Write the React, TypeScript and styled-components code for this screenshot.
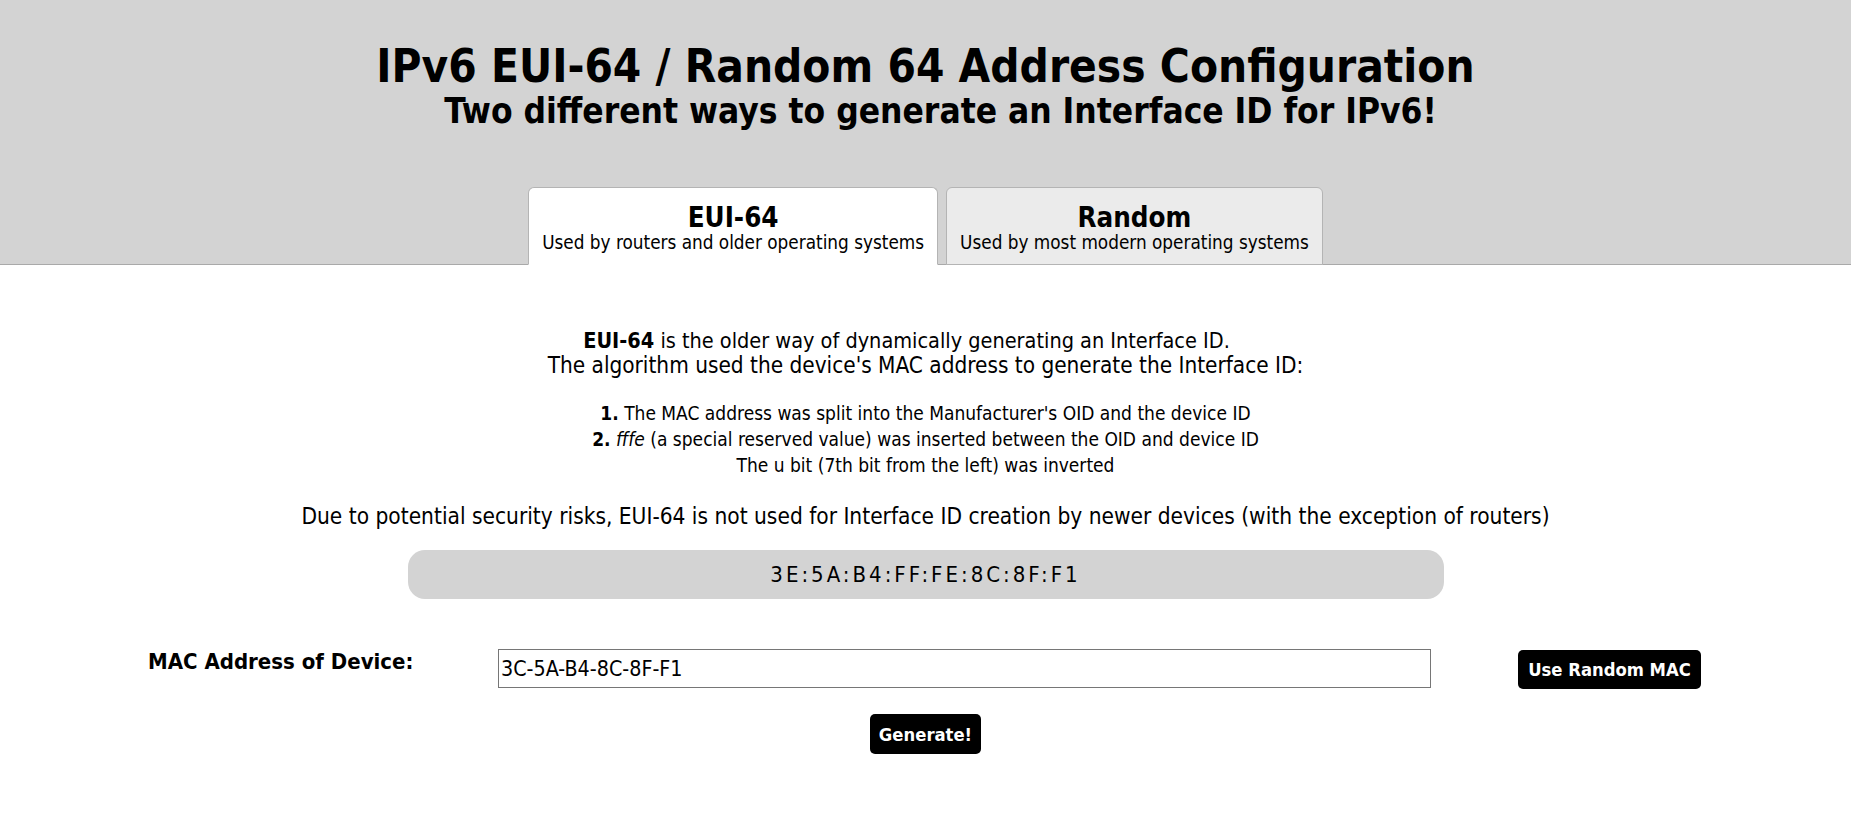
import React from "react";
import styled, { createGlobalStyle } from "styled-components";

const FONT = `"DejaVu Sans Condensed", "DejaVu Sans", sans-serif`;

const Global = createGlobalStyle`
  html, body { margin: 0; padding: 0; background: #fff; }
  body { font-family: ${FONT}; color: #000; }
`;

const Header = styled.header`
  background: #d3d3d3;
  border-bottom: 1px solid #a9a9a9;
  padding-top: 41px;
  display: flex;
  flex-direction: column;
  align-items: center;
`;

const Title = styled.h1`
  margin: 0;
  font-size: 45.5px;
  line-height: 52px;
  font-weight: bold;
  text-align: center;
`;

const Subtitle = styled.h2`
  margin: 0 0 0 30px;
  font-size: 35px;
  line-height: 36px;
  font-weight: bold;
  text-align: center;
`;

const Tabs = styled.nav`
  display: flex;
  gap: 8px;
  justify-content: center;
  margin-top: 58px;
  margin-bottom: -1px;
`;

const Tab = styled.div<{ $active?: boolean }>`
  background: ${(p) => (p.$active ? "#fff" : "#ebebeb")};
  border: 1px solid #b4b4b4;
  border-bottom-color: ${(p) => (p.$active ? "#fff" : "#b4b4b4")};
  border-radius: 6px 6px 0 0;
  padding: 14px 13px 10px;
  text-align: center;
`;

const TabTitle = styled.div`
  font-size: 27.5px;
  line-height: 30px;
  font-weight: bold;
`;

const TabSub = styled.div`
  font-size: 18.8px;
  line-height: 22px;
`;

const Main = styled.main`
  text-align: center;
  padding-top: 64px;
`;

const Lead = styled.p<{ $size: number; $trail?: number }>`
  margin: 0;
  font-size: ${(p) => p.$size}px;
  line-height: 24px;
  padding-right: ${(p) => p.$trail ?? 0}px;
`;

const Steps = styled.ol`
  list-style: none;
  margin: 23px 0 0;
  padding: 0;
  font-size: 19px;
  line-height: 26px;
`;

const Warning = styled.p`
  margin: 25px 0 0;
  font-size: 22.5px;
  line-height: 26px;
`;

const Result = styled.div`
  width: 1036px;
  height: 49px;
  margin: 21px auto 0;
  background: #d3d3d3;
  border-radius: 17px;
  display: flex;
  align-items: center;
  justify-content: center;
  font-size: 22px;
  letter-spacing: 3px;
`;

const FormRow = styled.div`
  display: grid;
  grid-template-columns: 350px 933px auto;
  padding: 0 0 0 148px;
  margin-top: 50px;
  text-align: left;
  align-items: start;
`;

const Label = styled.label`
  font-size: 22px;
  font-weight: bold;
  line-height: 26px;
`;

const Input = styled.input`
  box-sizing: border-box;
  width: 933px;
  height: 39px;
  border: 1px solid #767676;
  padding: 0 2px;
  font-family: ${FONT};
  font-size: 21.3px;
`;

const Button = styled.button`
  background: #000;
  color: #fff;
  border: none;
  border-radius: 5px;
  font-family: ${FONT};
  font-weight: bold;
  font-size: 18.3px;
  height: 39px;
  padding: 0 8px;
  cursor: pointer;
`;

const RandomButton = styled(Button)`
  margin-left: 87px;
  width: 183px;
  margin-top: 1px;
`;

const GenerateButton = styled(Button)`
  margin-top: 25px;
  width: 111px;
  height: 40px;
`;

export default function App() {
  return (
    <>
      <Global />
      <Header>
        <Title>IPv6 EUI-64 / Random 64 Address Configuration</Title>
        <Subtitle>Two different ways to generate an Interface ID for IPv6!</Subtitle>
        <Tabs>
          <Tab $active>
            <TabTitle>EUI-64</TabTitle>
            <TabSub>Used by routers and older operating systems</TabSub>
          </Tab>
          <Tab>
            <TabTitle>Random</TabTitle>
            <TabSub>Used by most modern operating systems</TabSub>
          </Tab>
        </Tabs>
      </Header>
      <Main>
        <Lead $size={21.5} $trail={38}>
          <b>EUI-64</b> is the older way of dynamically generating an Interface ID.
        </Lead>
        <Lead $size={22.4}>The algorithm used the device's MAC address to generate the Interface ID:</Lead>
        <Steps>
          <li>
            <b>1.</b> The MAC address was split into the Manufacturer's OID and the device ID
          </li>
          <li>
            <b>2.</b> <i>fffe</i> (a special reserved value) was inserted between the OID and device ID
          </li>
          <li>The u bit (7th bit from the left) was inverted</li>
        </Steps>
        <Warning>
          Due to potential security risks, EUI-64 is not used for Interface ID creation by newer devices (with the exception of routers)
        </Warning>
        <Result>3E:5A:B4:FF:FE:8C:8F:F1</Result>
        <FormRow>
          <Label htmlFor="mac">MAC Address of Device:</Label>
          <Input id="mac" defaultValue="3C-5A-B4-8C-8F-F1" />
          <RandomButton>Use Random MAC</RandomButton>
        </FormRow>
        <GenerateButton>Generate!</GenerateButton>
      </Main>
    </>
  );
}
